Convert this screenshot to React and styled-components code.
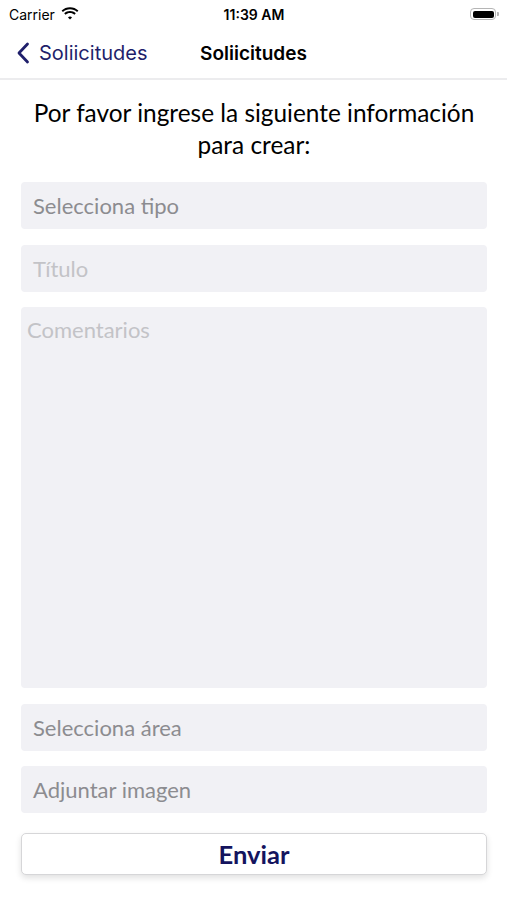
import styled, { createGlobalStyle } from 'styled-components'

const GlobalStyle = createGlobalStyle`
  body {
    margin: 0;
    background: #fff;
    font-family: Lato, "Noto Sans", sans-serif;
  }
`

const App = () => {
  return (
    <Screen>
      <GlobalStyle />
      <StatusBar>
        <Carrier>
          Carrier
          <svg width="18" height="13" viewBox="0 0 18 13">
            <path d="M9 2.2c2.7 0 5.2 1 7.1 2.8l1.3-1.4C15.1 1.4 12.2.2 9 .2S2.9 1.4.6 3.6L1.9 5C3.8 3.2 6.3 2.2 9 2.2z" fill="#000" />
            <path d="M9 6c1.7 0 3.2.6 4.4 1.7l1.4-1.4C13.2 4.8 11.2 4 9 4S4.8 4.8 3.2 6.3l1.4 1.4C5.8 6.6 7.3 6 9 6z" fill="#000" />
            <path d="M9 9.6c.8 0 1.5.3 2 .8L9 12.6 7 10.4c.5-.5 1.2-.8 2-.8z" fill="#000" />
          </svg>
        </Carrier>
        <Clock>11:39 AM</Clock>
        <Battery>
          <BatteryBody>
            <BatteryFill />
          </BatteryBody>
          <BatteryCap />
        </Battery>
      </StatusBar>

      <NavBar>
        <BackButton>
          <svg width="14" height="22" viewBox="0 0 14 22">
            <path d="M11.5 2 L3 11 L11.5 20" fill="none" stroke="#1f1f6b" strokeWidth="2.8" strokeLinecap="round" strokeLinejoin="round" />
          </svg>
          Soliicitudes
        </BackButton>
        <NavTitle>Soliicitudes</NavTitle>
      </NavBar>

      <Content>
        <Heading>Por favor ingrese la siguiente información para crear:</Heading>

        <Field $tone="dark">Selecciona tipo</Field>
        <Field $tone="light">Título</Field>
        <TextArea>Comentarios</TextArea>
        <Field $tone="dark">Selecciona área</Field>
        <Field $tone="dark">Adjuntar imagen</Field>

        <SubmitButton>Enviar</SubmitButton>
      </Content>
    </Screen>
  )
}

export default App

// ---------- styled-components ----------

const Screen = styled.div`
  width: 507px;
  min-height: 900px;
  background: #fff;
`

const StatusBar = styled.div`
  height: 28px;
  display: grid;
  grid-template-columns: 1fr auto 1fr;
  align-items: center;
  padding: 0 8px 0 9px;
  font-family: Inter, "Liberation Sans", sans-serif;
  font-size: 14px;
  color: #000;
`

const Carrier = styled.div`
  display: flex;
  align-items: center;
  gap: 6px;

  svg {
    margin-top: -2px;
  }
`

const Clock = styled.div`
  font-weight: 600;
  text-align: center;
`

const Battery = styled.div`
  justify-self: end;
  display: flex;
  align-items: center;
`

const BatteryBody = styled.div`
  width: 26px;
  height: 12px;
  box-sizing: border-box;
  border: 1px solid #b5b5b5;
  border-radius: 4px;
  padding: 1.5px;
`

const BatteryFill = styled.div`
  width: 100%;
  height: 100%;
  background: #000;
  border-radius: 2px;
`

const BatteryCap = styled.div`
  width: 2px;
  height: 4px;
  margin-left: 1px;
  background: #b5b5b5;
  border-radius: 0 1px 1px 0;
`

const NavBar = styled.div`
  position: relative;
  height: 50px;
  display: flex;
  align-items: center;
  border-bottom: 2px solid #ececee;
  font-family: Inter, "Liberation Sans", sans-serif;
  font-size: 20px;
`

const BackButton = styled.div`
  display: flex;
  align-items: center;
  gap: 9px;
  padding-left: 16px;
  color: #1f1f6b;
`

const NavTitle = styled.div`
  position: absolute;
  left: 0;
  right: 0;
  text-align: center;
  font-size: 19px;
  font-weight: 600;
  color: #000;
  pointer-events: none;
`

const Content = styled.div`
  padding: 17px 20px 0 21px;
  display: flex;
  flex-direction: column;
`

const Heading = styled.h1`
  margin: 0 0 21px;
  text-align: center;
  font-family: Lato, sans-serif;
  font-weight: 400;
  font-size: 24.4px;
  line-height: 32px;
  color: #000;
`

const Field = styled.div`
  height: 47px;
  margin-bottom: 15.5px;
  padding-left: 12px;
  display: flex;
  align-items: center;
  background: #f1f1f5;
  border-radius: 4px;
  font-size: 22px;
  color: ${(p) => (p.$tone === 'light' ? '#c3c3c7' : '#8c8c90')};
`

const TextArea = styled.div`
  height: 381px;
  margin-bottom: 15.5px;
  padding: 9px 6px;
  box-sizing: border-box;
  background: #f1f1f5;
  border-radius: 4px;
  font-size: 22px;
  color: #c3c3c7;
`

const SubmitButton = styled.button`
  height: 42px;
  margin-top: 4.5px;
  background: #fff;
  border: 1px solid #d6d6d8;
  border-radius: 5px;
  box-shadow: 0 3px 6px rgba(0, 0, 0, 0.12);
  font-family: Lato, sans-serif;
  font-weight: 700;
  font-size: 25.5px;
  color: #14145e;
`
